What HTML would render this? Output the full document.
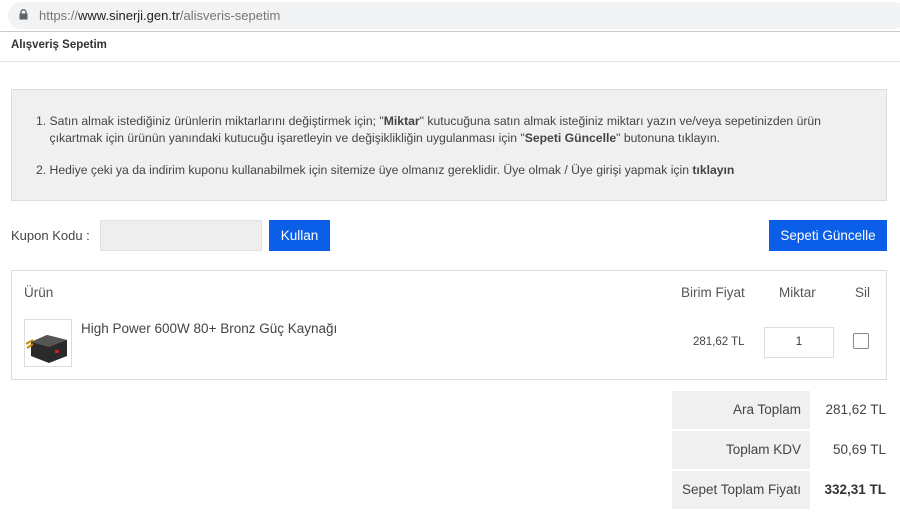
<!DOCTYPE html>
<html><head><meta charset="utf-8"><style>
*{margin:0;padding:0;box-sizing:border-box}
body{width:900px;height:519px;background:#fff;font-family:"Liberation Sans",sans-serif;color:#444;position:relative;overflow:hidden}
.a{position:absolute;white-space:nowrap}
</style></head><body>
<div class="a" style="left:0;top:0;width:900px;height:31px;background:#fff"></div>
<div class="a" style="left:8px;top:2px;width:900px;height:27px;background:#f1f3f4;border-radius:14px"></div>
<svg class="a" style="left:19px;top:9px" width="9" height="11" viewBox="0 0 9 11"><rect x="0.5" y="4.5" width="8" height="6" fill="#5f6368"/><path d="M2 5V3.2a2.5 2.5 0 0 1 5 0V5" fill="none" stroke="#5f6368" stroke-width="1.3"/></svg>
<div class="a" style="left:39px;top:8px;font-size:13px;color:#777">https://<span style="color:#222">www.sinerji.gen.tr</span>/alisveris-sepetim</div>
<div class="a" style="left:0;top:31px;width:900px;height:1px;background:#ccc"></div>
<div class="a" style="left:11px;top:39px;font-size:11.5px;font-weight:bold;color:#333">Alışveriş Sepetim</div>
<div class="a" style="left:0;top:61px;width:900px;height:1px;background:#e5e5e5"></div>
<div class="a" style="left:11px;top:89px;width:876px;height:112px;background:#f0f0f0;border:1px solid #ddd"></div>
<div class="a" style="left:36px;top:113px;font-size:12.2px;line-height:17px;color:#444">1. Satın almak istediğiniz ürünlerin miktarlarını değiştirmek için; "<b>Miktar</b>" kutucuğuna satın almak isteğiniz miktarı yazın ve/veya sepetinizden ürün<br>&nbsp;&nbsp;&nbsp;&nbsp;çıkartmak için ürünün yanındaki kutucuğu işaretleyin ve değişiklikliğin uygulanması için "<b>Sepeti Güncelle</b>" butonuna tıklayın.</div>
<div class="a" style="left:36px;top:162px;font-size:12.2px;line-height:17px;color:#444">2. Hediye çeki ya da indirim kuponu kullanabilmek için sitemize üye olmanız gereklidir. Üye olmak / Üye girişi yapmak için <b>tıklayın</b></div>
<div class="a" style="left:11px;top:228px;font-size:13px;color:#444">Kupon Kodu :</div>
<div class="a" style="left:100px;top:220px;width:162px;height:31px;background:#eee;border:1px solid #e2e2e2"></div>
<div class="a" style="left:269px;top:220px;width:61px;height:31px;background:#0a5ee8;color:#fff;font-size:13.5px;line-height:31px;text-align:center">Kullan</div>
<div class="a" style="left:769px;top:220px;width:118px;height:31px;background:#0a5ee8;color:#fff;font-size:13.5px;line-height:31px;text-align:center">Sepeti Güncelle</div>
<div class="a" style="left:11px;top:270px;width:876px;height:110px;border:1px solid #ddd"></div>
<div class="a" style="left:24px;top:285px;font-size:13.5px;color:#555">Ürün</div>
<div class="a" style="left:681px;top:285px;font-size:13.5px;color:#555">Birim Fiyat</div>
<div class="a" style="left:779px;top:285px;font-size:13.5px;color:#555">Miktar</div>
<div class="a" style="left:855px;top:285px;font-size:13.5px;color:#555">Sil</div>
<div class="a" style="left:24px;top:319px;width:48px;height:48px;border:1px solid #ddd;background:#fff"></div>
<svg class="a" style="left:25px;top:320px" width="46" height="46" viewBox="0 0 46 46"><path d="M6 22 L22 15 L42 20 L42 36 L24 43 L6 36Z" fill="#2a2a2a"/><path d="M6 22 L22 15 L42 20 L24 27Z" fill="#555"/><path d="M1 24 L8 20 M2 28 L8 24" stroke="#c80" stroke-width="2"/><rect x="30" y="30" width="4" height="3" fill="#c22"/></svg>
<div class="a" style="left:81px;top:321px;font-size:13.5px;color:#444">High Power 600W 80+ Bronz Güç Kaynağı</div>
<div class="a" style="left:693px;top:336px;font-size:11.5px;color:#444">281,62 TL</div>
<div class="a" style="left:764px;top:327px;width:70px;height:31px;border:1px solid #ddd;font-size:11.5px;line-height:29px;text-align:center;color:#333">1</div>
<div class="a" style="left:853px;top:333px;width:16px;height:16px;border:1px solid #888;border-radius:2px"></div>
<div class="a" style="left:672px;top:391px;width:138px;height:38px;background:#f0f0f0;font-size:13.5px;line-height:38px;text-align:right;padding-right:9px;color:#444">Ara Toplam</div>
<div class="a" style="left:672px;top:431px;width:138px;height:38px;background:#f0f0f0;font-size:13.5px;line-height:38px;text-align:right;padding-right:9px;color:#444">Toplam KDV</div>
<div class="a" style="left:672px;top:471px;width:138px;height:38px;background:#f0f0f0;font-size:13.5px;line-height:38px;text-align:right;padding-right:9px;color:#444">Sepet Toplam Fiyatı</div>
<div class="a" style="right:14px;top:391px;font-size:13.5px;line-height:38px;color:#444">281,62 TL</div>
<div class="a" style="right:14px;top:431px;font-size:13.5px;line-height:38px;color:#444">50,69 TL</div>
<div class="a" style="right:14px;top:471px;font-size:13.5px;line-height:38px;color:#333;font-weight:bold">332,31 TL</div>
</body></html>
